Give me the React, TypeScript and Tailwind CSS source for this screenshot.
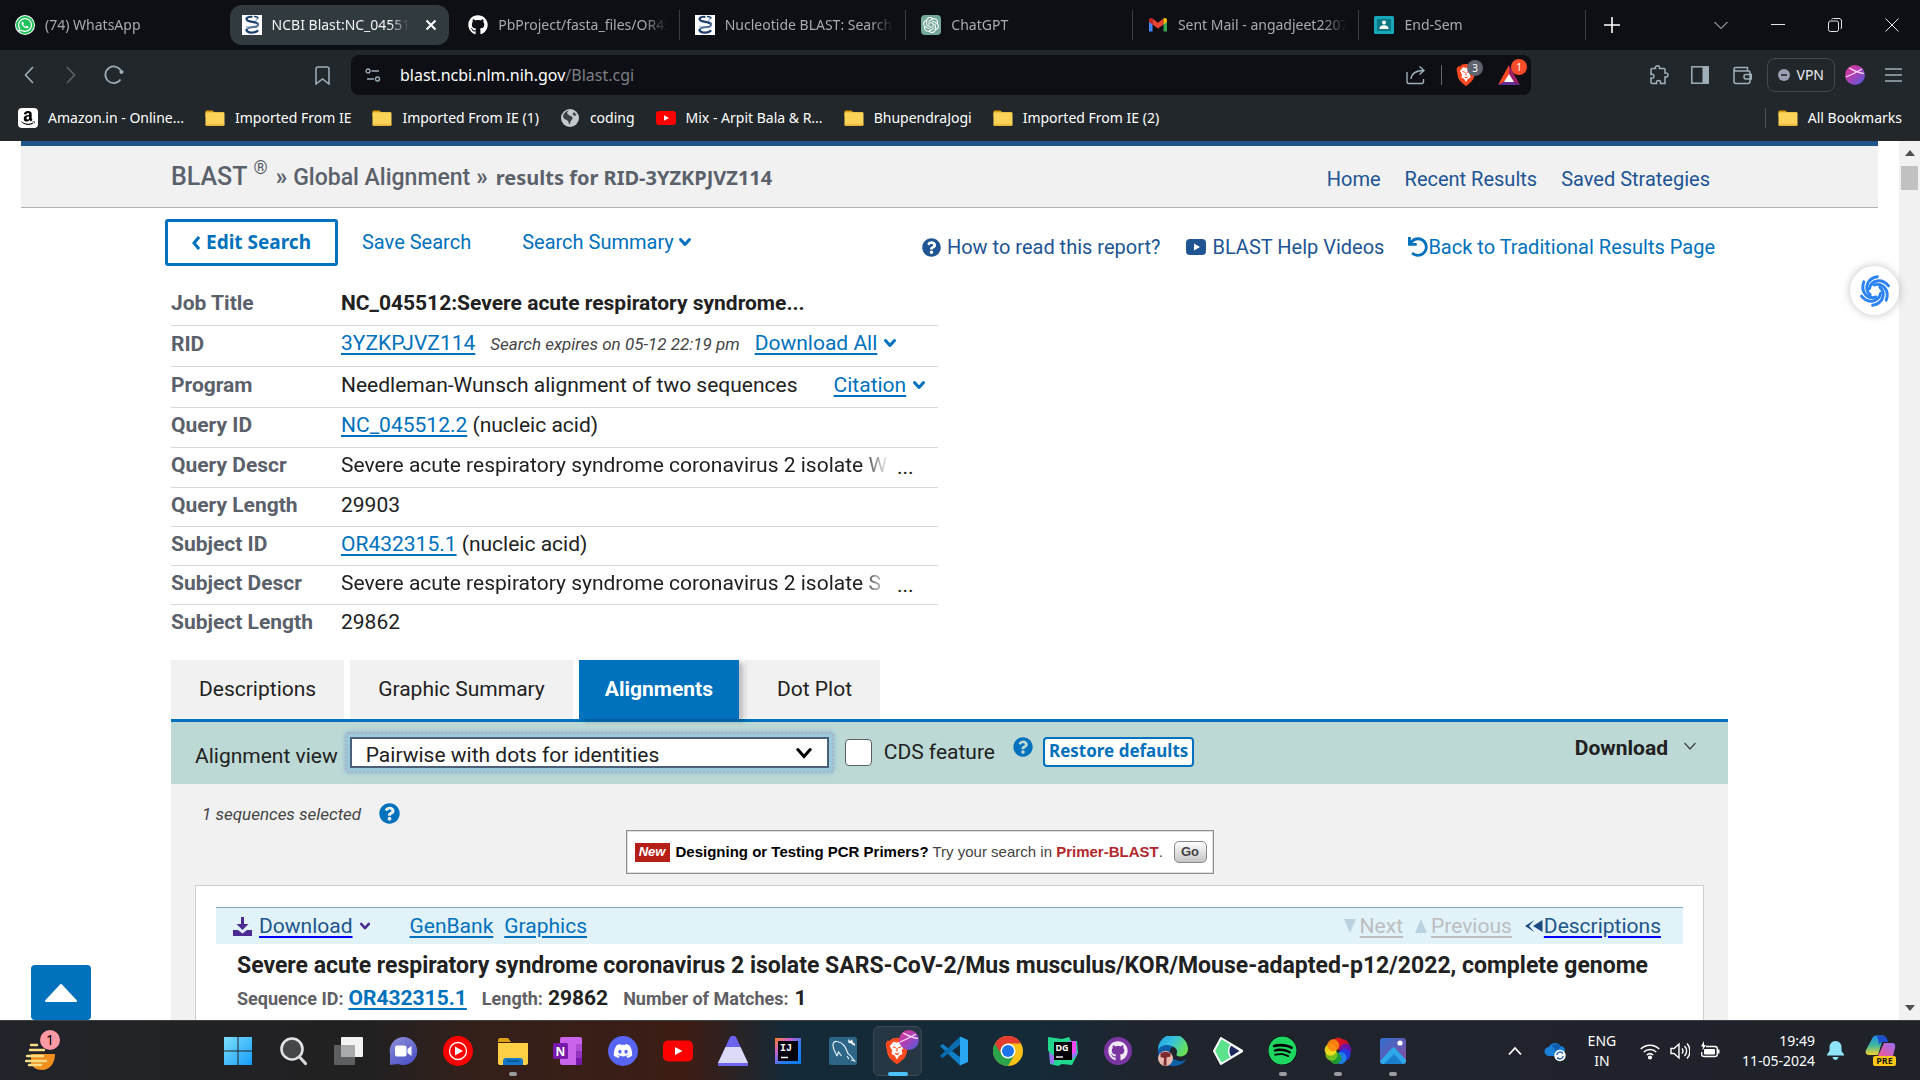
import React from "react";
import {
  FaAmazon,
  FaDiscord,
  FaGithub,
  FaQuestionCircle,
  FaSpotify,
  FaUndo,
  FaWhatsapp,
} from "react-icons/fa";
import { SiOpenai } from "react-icons/si";

const UI = "font-['Noto_Sans','Open_Sans',sans-serif]";
const BOLD_UI = "font-['Noto_Sans','Open_Sans',sans-serif] font-bold";

/* ---------- icons ---------- */

function BlastIcon() {
  return (
    <svg className="size-5" viewBox="0 0 20 20">
      <rect width="20" height="20" fill="#fff" />
      <path d="M16 3C13 4 15 7 12 7.500M4 11.500C6 13 12 11 15 12.500" fill="none" stroke="#9fb4cc" strokeWidth="1.500" />
      <path d="M9.500 1.800C5 1.500 3 4 6 5.800c3 1.500 8 .8 10 3.200" fill="none" stroke="#1f3f6b" strokeWidth="2.200" strokeLinecap="round" />
      <path d="M16 9c1 2.500-3 3-6 3.200-3 .3-5 1.200-5.500 2.800" fill="none" stroke="#55749c" strokeWidth="2" strokeLinecap="round" />
      <path d="M4.500 15c.5 2.500 6 4 11 1" fill="none" stroke="#1f3f6b" strokeWidth="2.200" strokeLinecap="round" />
      <path d="M12 1.500c2 0 4 .8 4 2" fill="none" stroke="#1f3f6b" strokeWidth="1.600" />
    </svg>
  );
}

function WhatsAppIcon() {
  return (
    <span className="flex size-5 items-center justify-center rounded-full bg-white">
      <span className="flex size-[18px] items-center justify-center rounded-full bg-[#1fc15b] text-white">
        <FaWhatsapp className="size-4" />
      </span>
    </span>
  );
}

function ChatGptIcon() {
  return (
    <span className="flex size-5 items-center justify-center rounded bg-[#74a89b] text-white">
      <SiOpenai className="size-4" />
    </span>
  );
}

function GmailIcon() {
  return (
    <svg className="size-5" viewBox="0 0 20 20">
      <path d="M1 5v11.500h3.500V8z" fill="#4285f4" />
      <path d="M15.500 8v8.500H19V5z" fill="#34a853" />
      <path d="M1 5.200C1 3 3.300 2.600 4.500 3.500V9.500L1 7z" fill="#c5221f" />
      <path d="M4.500 3.500L10 7.700l5.500-4.200v6L10 13.500 4.500 9.500z" fill="#ea4335" />
      <path d="M15.500 3.500C17 2.500 19 3.200 19 5.200V7l-3.500 2.500z" fill="#fbbc04" />
    </svg>
  );
}

function ClassroomIcon() {
  return (
    <svg className="size-5" viewBox="0 0 20 20">
      <rect y="1" width="20" height="18" rx="1.500" fill="#16a8b8" />
      <rect x="3" y="4" width="14" height="12" fill="#0c7885" />
      <circle cx="10" cy="7.500" r="2" fill="#fff" />
      <path d="M5.500 14c0-3 2-3.800 4.500-3.800s4.500.8 4.500 3.800z" fill="#fff" />
    </svg>
  );
}

function FolderIcon() {
  return (
    <svg className="size-5" viewBox="0 0 20 20">
      <path d="M.5 4c0-1 .5-1.500 1.500-1.500h5c1 0 1.500 1 2 1.800H19V9H.5z" fill="#dd9a0b" />
      <rect x=".5" y="4.200" width="19" height="13.500" rx="1.200" fill="#fbd358" />
      <path d="M.5 16v.6c0 .7.5 1.200 1.200 1.200h16.600c.7 0 1.200-.5 1.200-1.200V16z" fill="#f0bb3a" />
    </svg>
  );
}

function YouTubeIcon({ className }: { className: string }) {
  return (
    <svg className={className} viewBox="0 0 30 30">
      <rect y="4.500" width="30" height="21" rx="5" fill="#f00" />
      <path d="M12 11l7.500 4-7.500 4z" fill="#fff" />
    </svg>
  );
}

function GlobeIcon() {
  return (
    <svg className="size-5" viewBox="0 0 20 20">
      <circle cx="10" cy="10" r="9" fill="#c5c8cc" />
      <path d="M9 2.500c-2 1-2.500 3-1 3.800s1 1.700 2.500 1.700 2.500 1 1.800 3-2 1.500-2 3.500-.8 2.500-1.300 1-1-3-2.500-3.500S4 10.500 3 9C3 5.500 6 3 9 2.500zM14 4l2.500 3-2 1-2-2z" fill="#3c4146" />
    </svg>
  );
}

function AvatarIcon({ className }: { className: string }) {
  return (
    <svg className={className} viewBox="0 0 20 20">
      <defs>
        <linearGradient id="avatar" x1="0" y1="0" x2="1" y2="1">
          <stop offset="0" stopColor="#e0368c" />
          <stop offset=".45" stopColor="#b03fb4" />
          <stop offset="1" stopColor="#4a5be0" />
        </linearGradient>
      </defs>
      <circle cx="10" cy="10" r="10" fill="url(#avatar)" />
      <path d="M1 12C6 10 12 7 17 4M4 3c4 2 9 5 15 5.500" fill="none" stroke="#f7d9f1" strokeWidth="1.200" />
    </svg>
  );
}

function BraveIcon({ className }: { className: string }) {
  return (
    <svg className={className} viewBox="1 0 20 22">
      <path d="M11 0l4 .5 2 2 2-.3 1.500 3L19 13c-1 4-5 7-8 9-3-2-7-5-8-9L1.500 5.200 3 2.200l2 .3 2-2z" fill="#fb4a1f" />
      <path d="M11 4l3-.8L17 7l-2 3.500.5 3-2.500 1.200L11 18l-2-3.300L6.500 13.500l.5-3L5 7l3-3.800z" fill="#fff" />
      <path d="M7.500 7.500l2.500.8M14.500 7.500l-2.500.8M9.500 13l1.500.8 1.500-.8M11 8.500v3" stroke="#fb4a1f" strokeWidth="1" fill="none" />
    </svg>
  );
}

function ChevronBold({ className }: { className: string }) {
  return (
    <svg className={className} viewBox="0 0 14 14" fill="none" stroke="currentColor" strokeWidth="3" strokeLinecap="round" strokeLinejoin="round">
      <path d="M2.500 4.500L7 9.500l4.500-5" />
    </svg>
  );
}

/* ---------- browser frame ---------- */

const TABS = [
  { title: "(74) WhatsApp", icon: <WhatsAppIcon /> },
  { title: "NCBI Blast:NC_04551", icon: <BlastIcon />, active: true },
  { title: "PbProject/fasta_files/OR43", icon: <FaGithub className="size-5 text-white" />, line: true },
  { title: "Nucleotide BLAST: Search", icon: <BlastIcon />, line: true },
  { title: "ChatGPT", icon: <ChatGptIcon />, line: true },
  { title: "Sent Mail - angadjeet2207", icon: <GmailIcon />, line: true },
  { title: "End-Sem", icon: <ClassroomIcon />, line: true },
];

function TabStrip() {
  return (
    <div className="flex h-[50px] shrink-0 items-center bg-[#0e0f14]">
      <div className="flex max-w-[1586px] flex-1 items-center" role="tablist">
        {TABS.map((t) => (
          <div key={t.title} className={`flex h-[30px] min-w-0 flex-1 items-center border-r ${t.line ? "border-[#3b3d42]" : "border-transparent"}`}>
            <div className={`mx-[3px] flex h-10 min-w-0 flex-1 items-center rounded-xl pr-2 pl-3 ${t.active ? "bg-[#313a3f]" : ""}`}>
              <button role="tab" className="flex min-w-0 flex-1 items-center gap-[10px]">
                <span className="shrink-0">{t.icon}</span>
                <span className={`min-w-0 flex-1 overflow-hidden text-left text-sm whitespace-nowrap [mask-image:linear-gradient(to_right,black_86%,transparent)] ${t.active ? "text-[#f2f3f4]" : "text-[#a9abae]"}`}>
                  {t.title}
                </span>
              </button>
              {t.active && (
                <button aria-label="Close tab" className="ml-3 flex size-5 items-center justify-center text-white">
                  <svg className="size-3" viewBox="0 0 12 12" stroke="currentColor" strokeWidth="2"><path d="M1.500 1.500l9 9M10.500 1.500l-9 9" /></svg>
                </button>
              )}
            </div>
          </div>
        ))}
      </div>
      <button aria-label="New tab" className="ml-4 flex size-5 items-center justify-center text-white">
        <svg className="size-4" viewBox="0 0 16 16" stroke="currentColor" strokeWidth="1.600"><path d="M8 0v16M0 8h16" /></svg>
      </button>
      <div className="ml-auto flex items-center text-[#e4e5e7]">
        <button aria-label="Search tabs" className="flex w-[57px] justify-center">
          <svg className="size-[14px]" viewBox="0 0 14 14" fill="none" stroke="currentColor"><path d="M.5 4L7 10.500 13.500 4" /></svg>
        </button>
        <button aria-label="Minimize" className="flex w-[57px] justify-center">
          <svg className="size-[14px]" viewBox="0 0 14 14" stroke="currentColor"><path d="M0 6.500h14" /></svg>
        </button>
        <button aria-label="Restore" className="flex w-[57px] justify-center">
          <svg className="size-[14px]" viewBox="0 0 14 14" fill="none" stroke="currentColor"><rect x=".5" y="3" width="10" height="10.500" rx="2" /><path d="M3.500 1.200C4 .7 4.500.5 5.500.5H11c1.500 0 2.500 1 2.500 2.500v6c0 1-.3 1.500-1 2" /></svg>
        </button>
        <button aria-label="Close" className="flex w-[57px] justify-center">
          <svg className="size-[14px]" viewBox="0 0 14 14" stroke="currentColor"><path d="M.5.5l13 13M13.500.5l-13 13" /></svg>
        </button>
      </div>
    </div>
  );
}

function Toolbar() {
  return (
    <div className="flex h-[50px] shrink-0 items-center bg-[#22272b] text-[#9fb0ba]">
      <button aria-label="Back" className="ml-[19px] flex w-5 justify-center">
        <svg className="h-[18px] w-[10px]" viewBox="0 0 10 18" fill="none" stroke="currentColor" strokeWidth="1.600"><path d="M9 1L1.500 9 9 17" /></svg>
      </button>
      <button aria-label="Forward" className="ml-[22px] flex w-5 justify-center text-[#59636a]">
        <svg className="h-[18px] w-[10px]" viewBox="0 0 10 18" fill="none" stroke="currentColor" strokeWidth="1.600"><path d="M1 1l7.500 8L1 17" /></svg>
      </button>
      <button aria-label="Reload" className="ml-[22px]">
        <svg className="size-[22px]" viewBox="0 0 22 22" fill="none" stroke="currentColor" strokeWidth="1.700"><path d="M17.500 15.500A8.300 8.300 0 1 1 18.500 8" /><circle cx="18.500" cy="8" r="2" fill="currentColor" stroke="none" /></svg>
      </button>
      <button aria-label="Bookmark this page" className="ml-[187px] flex w-5 justify-center">
        <svg className="h-[19px] w-[15px]" viewBox="0 0 15 19" fill="none" stroke="currentColor" strokeWidth="1.500"><path d="M1 3c0-1.300.7-2 2-2h9c1.300 0 2 .7 2 2v15l-6.500-5L1 18z" /></svg>
      </button>
      <div className="ml-[19px] flex h-10 max-w-[1180px] flex-1 items-center rounded-lg bg-[#0e0f14] pr-[10px]">
        <button aria-label="Site information" className="ml-[14px] shrink-0">
          <svg className="size-4" viewBox="0 0 16 16" fill="none" stroke="currentColor" strokeWidth="1.300"><circle cx="3" cy="4" r="2" /><path d="M6.500 4H14M2 12h7" /><circle cx="12.500" cy="12" r="2" /></svg>
        </button>
        <div className="relative ml-[19px] h-6 flex-1">
          <input aria-label="Address" className="absolute inset-0 w-full bg-transparent outline-none" />
          <span className="pointer-events-none text-base whitespace-nowrap text-white">
            blast.ncbi.nlm.nih.gov<span className="text-[#7c7f84]">/Blast.cgi</span>
          </span>
        </div>
        <button aria-label="Share">
          <svg className="size-5" viewBox="0 0 20 20" fill="none" stroke="currentColor" strokeWidth="1.400"><path d="M1 7v9.500c0 1.500.8 2 2 2h12.500c1.200 0 2-.6 2-2V14M5 14c.5-5 4-8.500 13-8.500M13.500 1.500l4.500 4-4.500 4" /></svg>
        </button>
        <span className="mr-[13px] ml-[15px] h-5 w-px bg-[#64666b]" />
        <button aria-label="Brave Shields" className="relative">
          <BraveIcon className="h-[22px] w-[22px]" />
          <span className="absolute -top-1 left-3 flex size-4 items-center justify-center rounded-full bg-[#5e6370] text-[10px] text-white">3</span>
        </button>
        <button aria-label="Rewards" className="relative ml-5">
          <svg className="size-6" viewBox="0 0 24 24"><path d="M12 2L1 22l11-6z" fill="#ff4724" /><path d="M12 2l11 20-11-6z" fill="#9e1f63" /><path d="M1 22h22l-11-6z" fill="#662d91" /><path d="M12 11l-5 8h10z" fill="#fff" /></svg>
          <span className="absolute -top-1 left-[14px] flex size-4 items-center justify-center rounded-full bg-[#fb4d2b] text-[10px] text-white">1</span>
        </button>
      </div>
      <div className="ml-auto flex items-center pr-[18px]">
        <button aria-label="Extensions">
          <svg className="size-5" viewBox="0 0 20 20" fill="none" stroke="currentColor" strokeWidth="1.500"><path d="M3 3.500h3.500C6 1.500 7 .8 8.500.8s2.500.9 2 2.700H15c.6 0 1 .4 1 1V8c2-.4 3 .6 3 2s-1 2.400-3 2v6.500h-4.500c.6-2-.4-3-2-3s-2.500 1-2 3H3c-.6 0-1-.4-1-1V13c2 .5 3-.5 3-1.800S4 9 2 9.500v-5c0-.6.4-1 1-1z" /></svg>
        </button>
        <button aria-label="Sidebar" className="ml-[22px]">
          <svg className="size-[18px]" viewBox="0 0 18 18"><rect x=".8" y=".8" width="16.400" height="16.400" fill="none" stroke="currentColor" strokeWidth="1.500" /><rect x="11.500" y="1" width="6" height="16" fill="currentColor" /></svg>
        </button>
        <button aria-label="Wallet" className="ml-6">
          <svg className="size-[19px]" viewBox="0 0 19 19" fill="none" stroke="currentColor" strokeWidth="1.500"><path d="M1 3.500C1 2.500 1.800 1.500 3 1.500h11.500V5M1 3.500C1 4.500 2 5 3 5h12.500c1 0 1.500.6 1.500 1.500v9c0 1.200-.8 2-2 2H3c-1.200 0-2-.8-2-2zM18.500 8.500h-5.500c-1.300 0-2 .8-2 2s.7 2.500 2 2.500h5.500z" /></svg>
        </button>
        <button className="ml-[15px] flex h-[34px] items-center gap-[6px] rounded-lg border border-[#424b51] px-[10px] text-sm text-[#eceef0]">
          <svg className="size-3" viewBox="0 0 12 12"><circle cx="6" cy="6" r="6" fill="#9d9fb6" /><path d="M3 6h6" stroke="#22272b" strokeWidth="1.600" /></svg>
          VPN
        </button>
        <button aria-label="Profile" className="ml-[10px]"><AvatarIcon className="size-5" /></button>
        <button aria-label="Menu" className="ml-5">
          <svg className="h-[14px] w-[17px]" viewBox="0 0 17 14" stroke="currentColor" strokeWidth="1.300"><path d="M0 1h17M0 7h17M0 13h17" /></svg>
        </button>
      </div>
    </div>
  );
}

function BookmarkBar() {
  const item = "flex items-center gap-[10px] whitespace-nowrap";
  return (
    <nav aria-label="Bookmarks" className="flex h-[41px] shrink-0 items-center bg-[#22272b] px-[18px] pb-[6px] text-sm text-white">
      <div className="flex flex-1 items-center gap-[21px]">
        <a href="#amazon" className={item}>
          <span className="flex size-5 items-center justify-center rounded bg-white text-black"><FaAmazon className="size-4" /></span>
          Amazon.in - Online...
        </a>
        <a href="#ie" className={item}><FolderIcon />Imported From IE</a>
        <a href="#ie1" className={item}><FolderIcon />Imported From IE (1)</a>
        <a href="#coding" className={item}><GlobeIcon />coding</a>
        <a href="#mix" className={item}><YouTubeIcon className="size-5" />Mix - Arpit Bala &amp; R...</a>
        <a href="#bj" className={item}><FolderIcon />BhupendraJogi</a>
        <a href="#ie2" className={item}><FolderIcon />Imported From IE (2)</a>
      </div>
      <span className="mr-3 h-5 w-px bg-[#4b5257]" />
      <a href="#all" className={item}><FolderIcon />All Bookmarks</a>
    </nav>
  );
}

/* ---------- page ---------- */

const LINK = "text-[#0071bc] underline decoration-2 underline-offset-[3px]";

function PageHeader() {
  return (
    <header className="mx-[21px] flex h-[67px] items-center border-t-[5px] border-b border-t-[#20558a] border-b-[#aeb0b5] bg-[#f1f1f1] pr-[168px] pl-[150px]">
      <h1 className="flex flex-1 items-baseline text-[23px] font-bold whitespace-nowrap text-[#5b616b]">
        <span className="text-[25px] font-medium">BLAST</span>
        <sup className="top-0 ml-[6px] self-start text-lg leading-5 font-normal">®</sup>
        <span className="ml-2">»</span>
        <span className="ml-[6px] font-medium">Global Alignment</span>
        <span className="ml-[6px]">»</span>
        <span className={`ml-2 text-xl ${BOLD_UI}`}>results for RID-3YZKPJVZ114</span>
      </h1>
      <nav className="flex gap-6 pt-1 text-xl text-[#205493]">
        <a href="#home">Home</a>
        <a href="#recent">Recent Results</a>
        <a href="#saved">Saved Strategies</a>
      </nav>
    </header>
  );
}

function Actions() {
  return (
    <div className="-ml-[6px] flex items-start pt-[11px] pr-[13px] text-xl text-[#0071bc]">
      <button className={`flex h-[47px] items-center gap-[6px] rounded-[3px] border-[3px] border-[#0071bc] px-6 text-[19px] ${BOLD_UI}`}>
        <svg className="h-[14px] w-2" viewBox="0 0 8 14" fill="none" stroke="currentColor" strokeWidth="3"><path d="M7 1L2 7l5 6" /></svg>
        Edit Search
      </button>
      <a href="#save" className="mt-[9px] ml-6">Save Search</a>
      <button className="mt-[9px] ml-[51px] flex items-center gap-1">Search Summary <ChevronBold className="size-[14px]" /></button>
      <div className="mt-[14px] ml-auto flex items-center text-[#205493]">
        <a href="#how" className="flex items-center gap-[6px]"><FaQuestionCircle className="size-[19px]" />How to read this report?</a>
        <a href="#videos" className="ml-[26px] flex items-center gap-[6px]">
          <svg className="h-4 w-5" viewBox="0 0 20 16"><rect width="20" height="16" rx="4" fill="currentColor" /><path d="M8 4.500l6 3.500-6 3.500z" fill="#fff" /></svg>
          BLAST Help Videos
        </a>
        <a href="#back" className="ml-6 flex items-center text-[#0071bc]"><FaUndo className="size-5" />Back to Traditional Results Page</a>
      </div>
    </div>
  );
}

function Clipped({ text }: { text: string }) {
  return (
    <span className="flex items-start">
      <span className="w-[548px] overflow-hidden whitespace-nowrap [mask-image:linear-gradient(to_right,black_95%,transparent)]">{text}</span>
      <button aria-label="Show full description" className="ml-2 h-7 leading-8">...</button>
    </span>
  );
}

const ROWS: { label: string; height: string; value: React.ReactNode }[] = [
  { label: "Job Title", height: "h-10", value: <b>NC_045512:Severe acute respiratory syndrome...</b> },
  {
    label: "RID",
    height: "h-[41px]",
    value: (
      <span className="flex items-baseline whitespace-nowrap">
        <a href="#rid" className={LINK}>3YZKPJVZ114</a>
        <em className="ml-[15px] text-[17px] text-[#444]">Search expires on 05-12 22:19 pm</em>
        <button className="ml-[15px] flex items-baseline gap-[6px] text-[#0071bc]"><span className={LINK}>Download All</span> <ChevronBold className="size-[14px]" /></button>
      </span>
    ),
  },
  {
    label: "Program",
    height: "h-[41px]",
    value: (
      <span className="flex items-baseline whitespace-nowrap">
        Needleman-Wunsch alignment of two sequences
        <button className="ml-9 flex items-baseline gap-[6px] text-[#0071bc]"><span className={LINK}>Citation</span> <ChevronBold className="size-[14px]" /></button>
      </span>
    ),
  },
  { label: "Query ID", height: "h-10", value: <><a href="#query" className={LINK}>NC_045512.2</a> (nucleic acid)</> },
  { label: "Query Descr", height: "h-10", value: <Clipped text="Severe acute respiratory syndrome coronavirus 2 isolate W" /> },
  { label: "Query Length", height: "h-[39px]", value: "29903" },
  { label: "Subject ID", height: "h-[39px]", value: <><a href="#subject" className={LINK}>OR432315.1</a> (nucleic acid)</> },
  { label: "Subject Descr", height: "h-[39px]", value: <Clipped text="Severe acute respiratory syndrome coronavirus 2 isolate S" /> },
  { label: "Subject Length", height: "h-[39px]", value: "29862" },
];

function JobDetails() {
  return (
    <table className="mt-[19px] w-[767px] border-collapse text-[21px] leading-7 text-[#212121]">
      <tbody>
        {ROWS.map((r) => (
          <tr key={r.label} className={`${r.height} border-b border-[#d6d7d9] last:border-b-0`}>
            <th scope="row" className="w-[170px] p-0 pb-1 text-left font-bold whitespace-nowrap text-[#5b616b]">{r.label}</th>
            <td className="p-0 pb-1">{r.value}</td>
          </tr>
        ))}
      </tbody>
    </table>
  );
}

function ResultTabs() {
  const tab = "h-[59px] bg-[#f1f1f1]";
  return (
    <div role="tablist" className="mt-[17px] flex border-b-[3px] border-[#0071bc] text-[21px] text-[#212121]">
      <button role="tab" className={`${tab} mr-[6px] px-7`}>Descriptions</button>
      <button role="tab" className={`${tab} mr-[6px] px-7`}>Graphic Summary</button>
      <button role="tab" aria-selected="true" className="z-10 mr-[6px] h-[59px] bg-[#0071bc] px-[26px] font-bold text-white shadow-[5px_2px_5px_rgba(0,0,0,0.25)]">Alignments</button>
      <button role="tab" className={`${tab} px-8 pr-7`}>Dot Plot</button>
    </div>
  );
}

function AlignmentControls() {
  return (
    <div className="flex h-[62px] items-start bg-[#bdd9d5] pl-6 text-[21px] leading-7 text-[#212121]">
      <label htmlFor="view" className="mt-5">Alignment view</label>
      <div className="relative mt-[10px] ml-[7px] rounded-sm border-2 border-dotted border-[#a8b2c4] bg-[#9cc9dc] p-[3px] shadow-[0_0_5px_rgba(80,160,220,0.5)]">
        <select id="view" className="block h-[31px] w-[479px] appearance-none rounded-none border-2 border-[#4c5f78] bg-white pt-1 pl-[14px] leading-6 outline-none">
          <option>Pairwise with dots for identities</option>
        </select>
        <svg className="pointer-events-none absolute top-[11px] right-5 size-4" viewBox="0 0 16 16" fill="none" stroke="#000" strokeWidth="3" strokeLinecap="round"><path d="M1.800 4.500L8 11.500l6.200-7" /></svg>
      </div>
      <input id="cds" type="checkbox" className="mt-[17px] ml-[11px] size-[27px] appearance-none rounded border border-[#5b616b] bg-white" />
      <label htmlFor="cds" className="mt-4 ml-3">CDS feature</label>
      <button aria-label="Help" className="mt-[15px] ml-[18px] text-[#0071bc]"><FaQuestionCircle className="size-5" /></button>
      <button className={`mt-[15px] ml-[10px] h-[30px] rounded-sm border-2 border-[#0071bc] bg-white px-1 pb-1 text-[17px] leading-6 text-[#0071bc] ${BOLD_UI}`}>Restore defaults</button>
      <button className="mt-3 mr-[32px] ml-auto flex items-center gap-4 font-bold">
        Download
        <svg className="mb-1 h-2 w-3" viewBox="0 0 12 8" fill="none" stroke="#444" strokeWidth="1.300"><path d="M.5 1L6 7l5.500-6" /></svg>
      </button>
    </div>
  );
}

function PrimerBanner() {
  return (
    <div className="mx-auto flex h-11 w-[588px] items-center border border-[#8e8e8e] bg-white pl-2 font-['Liberation_Sans',Arial,sans-serif] text-[15px] whitespace-nowrap text-[#444] shadow-[inset_0_0_0_1px_#ddd]">
      <span className="flex h-[19px] w-[35px] items-center justify-center bg-[#b51f17] text-[13px] font-bold text-white italic">New</span>
      <span className="ml-[6px]">
        <b className="text-black">Designing or Testing PCR Primers?</b> Try your search in <a href="#primer" className="font-bold text-[#b3282d]">Primer-BLAST</a>.
      </span>
      <button className="mr-[6px] ml-auto h-[22px] w-[33px] rounded-[5px] border border-[#888] bg-gradient-to-b from-white to-[#c4c4c4] text-[13px] leading-5 font-bold text-[#444]">Go</button>
    </div>
  );
}

function AlignmentCard() {
  const dark = "underline decoration-[#0000ff] decoration-2 underline-offset-[3px] text-[#20558a]";
  const off = "text-[#bcbec0] underline decoration-2 underline-offset-[3px]";
  return (
    <section className="mx-6 mt-[11px] border border-[#cfcfcf] bg-white px-5 pt-[21px] pb-10 text-[21px] leading-7 text-[#212121]">
      <div className="flex h-[37px] items-center border-t border-[#85a9c4] bg-[#e1f2f9] pr-[22px] pl-[17px]">
        <button className="flex items-center text-[#4c2c92]">
          <svg className="size-[19px]" viewBox="0 0 19 19" fill="currentColor"><path d="M8 0h3v7h4.500L9.500 13 3.500 7H8zM0 13h5l4.500 3.500L14 13h5v6H0z" /></svg>
          <span className={`ml-[7px] ${dark}`}>Download</span>
          <ChevronBold className="ml-[6px] size-3" />
        </button>
        <a href="#genbank" className={`ml-[39px] ${LINK}`}>GenBank</a>
        <a href="#graphics" className={`ml-[11px] ${LINK}`}>Graphics</a>
        <div className="ml-auto flex items-center">
          <svg className="mr-1 h-[14px] w-3" viewBox="0 0 12 14"><path d="M0 0h12L6 14z" fill="#b9d2df" /></svg>
          <a href="#next" className={off}>Next</a>
          <svg className="mr-1 ml-3 h-[14px] w-3" viewBox="0 0 12 14"><path d="M0 14h12L6 0z" fill="#b9d2df" /></svg>
          <a href="#previous" className={off}>Previous</a>
          <svg className="ml-3 h-3 w-[19px]" viewBox="0 0 19 12" fill="#1a4c82"><path d="M18.500 0v12L9 6zM10.500 0L1 6l9.500 6-5.500-6z" /></svg>
          <a href="#descriptions" className={`ml-px ${dark}`}>Descriptions</a>
        </div>
      </div>
      <h2 className="mt-[6px] pl-[21px] text-[23px] leading-8 font-bold whitespace-nowrap">
        Severe acute respiratory syndrome coronavirus 2 isolate SARS-CoV-2/Mus musculus/KOR/Mouse-adapted-p12/2022, complete genome
      </h2>
      <div className="mt-[2px] flex items-baseline pl-[21px] text-lg leading-7 font-bold text-[#5f6063]">
        <span>Sequence ID:</span>
        <a href="#seq" className={`ml-[5px] text-[21px] ${LINK}`}>OR432315.1</a>
        <span className="ml-[15px]">Length:</span>
        <span className="ml-[5px] text-[21px] text-[#212121]">29862</span>
        <span className="ml-[15px]">Number of Matches:</span>
        <span className="ml-[6px] text-[21px] text-[#212121]">1</span>
      </div>
    </section>
  );
}

function SwirlButton() {
  return (
    <button aria-label="Assistant" className="absolute top-[125px] right-[21px] flex size-[49px] items-center justify-center rounded-full bg-white shadow-[0_0_8px_rgba(0,0,0,0.25)]">
      <svg className="size-9" viewBox="0 0 32 32" fill="none" stroke="#2b83f6" strokeLinecap="round" strokeWidth="2.600">
        {[0, 60, 120, 180, 240, 300].map((a) => (
          <path key={a} d="M11 14C12.500 6.500 22 4 28 11.500" transform={`rotate(${a} 16 16)`} />
        ))}
      </svg>
    </button>
  );
}

function Page() {
  return (
    <div className="relative flex min-h-0 flex-1 overflow-hidden bg-white font-['Roboto',sans-serif]">
      <main className="min-w-0 flex-1">
        <PageHeader />
        <div className="mx-[171px]">
          <Actions />
          <JobDetails />
          <ResultTabs />
          <AlignmentControls />
          <div className="bg-[#f1f1f1] pb-10">
            <div className="flex h-[46px] items-center pt-3 pl-[31px]">
              <em className="mt-1 text-[17px] text-[#444]">1 sequences selected</em>
              <button aria-label="Selection help" className="ml-[18px] text-[#0071bc]"><FaQuestionCircle className="size-[21px]" /></button>
            </div>
            <div className="pr-[60px]"><PrimerBanner /></div>
            <AlignmentCard />
          </div>
        </div>
      </main>
      <div aria-hidden="true" className="flex w-[21px] shrink-0 flex-col items-center bg-[#f1f1f1]">
        <svg className="mt-[9px] h-[6px] w-[10px]" viewBox="0 0 10 6"><path d="M0 6h10L5 0z" fill="#505050" /></svg>
        <div className="mt-[10px] h-6 w-[17px] bg-[#c1c1c1]" />
        <svg className="mt-auto mb-[9px] h-[6px] w-[10px]" viewBox="0 0 10 6"><path d="M0 0h10L5 6z" fill="#505050" /></svg>
      </div>
      <SwirlButton />
      <button aria-label="Back to top" className="absolute bottom-0 left-[31px] flex h-[55px] w-[60px] items-center justify-center rounded bg-[#0071bc]">
        <svg className="h-5 w-[34px]" viewBox="0 0 34 20"><path d="M17 2L32 18H2z" fill="#fff" stroke="#fff" strokeWidth="2" strokeLinejoin="round" /></svg>
      </button>
    </div>
  );
}

/* ---------- taskbar ---------- */

const S = "size-[30px]";

const APPS: { name: string; icon: React.ReactNode; running?: boolean; active?: boolean }[] = [
  {
    name: "Start",
    icon: (
      <svg className={S} viewBox="0 0 30 30">
        <defs><linearGradient id="win" x1="0" y1="0" x2="1" y2="1"><stop offset="0" stopColor="#7fe0fd" /><stop offset="1" stopColor="#149cfb" /></linearGradient></defs>
        <path d="M1 1h13.500v13.500H1zM15.500 1H29v13.500H15.500zM1 15.500h13.500V29H1zM15.500 15.500H29V29H15.500z" fill="url(#win)" />
      </svg>
    ),
  },
  {
    name: "Search",
    icon: (
      <svg className={S} viewBox="0 0 30 30"><circle cx="14" cy="13" r="10.500" fill="#444649" stroke="#e0e2e4" strokeWidth="2.600" /><path d="M21.500 21l6 6.500" stroke="#d6d8da" strokeWidth="3.200" strokeLinecap="round" /></svg>
    ),
  },
  {
    name: "Task view",
    icon: (
      <svg className={S} viewBox="0 0 30 30"><rect x="8" y="1" width="22" height="20" rx="1" fill="#f3f3f3" /><rect x="1" y="9" width="21" height="20" rx="1" fill="#5d5f61" /><rect x="8" y="9" width="14" height="12" fill="#a9aaab" /></svg>
    ),
  },
  {
    name: "Chat",
    icon: (
      <svg className={S} viewBox="0 0 30 30">
        <defs><linearGradient id="chat" x1="0" y1="0" x2=".6" y2="1"><stop offset="0" stopColor="#8d8fd6" /><stop offset="1" stopColor="#5156c9" /></linearGradient></defs>
        <path d="M15 1a14 14 0 1 1-5 27L2 29V18A14 14 0 0 1 15 1z" fill="url(#chat)" />
        <rect x="7" y="9.500" width="11.500" height="11" rx="2" fill="#fff" /><path d="M19.500 13l4-3v10l-4-3z" fill="#fff" />
      </svg>
    ),
  },
  {
    name: "YouTube Music",
    icon: (
      <svg className={S} viewBox="0 0 30 30"><circle cx="15" cy="15" r="15" fill="#f00" /><circle cx="15" cy="15" r="8.500" fill="none" stroke="#fff" strokeWidth="1.300" /><path d="M12 10.500l8 4.500-8 4.500z" fill="#fff" /></svg>
    ),
  },
  {
    name: "File Explorer",
    running: true,
    icon: (
      <svg className={S} viewBox="0 0 30 30"><path d="M0 4c0-1 1-2 2-2h8l3 4H0z" fill="#e0a014" /><path d="M0 7h30v20c0 1-.8 2-2 2H2c-1.200 0-2-1-2-2z" fill="#fdcf45" /><path d="M5 29v-4c0-2 1-3 3-3h14c2 0 3 1 3 3v4z" fill="#1177c8" /><path d="M9 25h12" stroke="#0a4f8c" strokeWidth="1.500" /></svg>
    ),
  },
  {
    name: "OneNote",
    icon: (
      <svg className={S} viewBox="0 0 30 30"><rect x="7" y="1" width="22" height="28" rx="2" fill="#ca64ea" /><path d="M23 8h6v7h-6z" fill="#ae4bd5" /><path d="M23 15h6v7h-6z" fill="#9332bf" /><path d="M23 22h6v5c0 1-1 2-2 2h-4z" fill="#7719aa" /><rect y="7" width="15" height="16" rx="1.500" fill="#7719aa" /><text x="7.500" y="19.500" textAnchor="middle" fontSize="12" fontWeight="700" fill="#fff">N</text></svg>
    ),
  },
  { name: "Discord", icon: <span className="flex size-[30px] items-center justify-center rounded-full bg-[#5865f2] text-white"><FaDiscord className="size-5" /></span> },
  { name: "YouTube", icon: <YouTubeIcon className={S} /> },
  {
    name: "Prism",
    icon: (
      <svg className={S} viewBox="0 0 30 30"><path d="M12 1c1-1.300 5-1.300 6 0L30 27v3H0v-3z" fill="#6c63ee" /><path d="M7.500 11h15L30 27H0z" fill="#dcdaf9" /></svg>
    ),
  },
  {
    name: "IntelliJ IDEA",
    icon: (
      <svg className={S} viewBox="0 0 30 30">
        <defs><linearGradient id="ij" x1="0" y1="0" x2="1" y2="1"><stop offset="0" stopColor="#fc801d" /><stop offset=".3" stopColor="#c95fd0" /><stop offset=".6" stopColor="#2a7cf0" /><stop offset="1" stopColor="#087cfa" /></linearGradient></defs>
        <rect x="2" y="2" width="26" height="26" fill="url(#ij)" /><rect x="5" y="5" width="20" height="20" fill="#05020c" />
        <text x="7" y="15" fontSize="10" fontWeight="700" fill="#fff" className="font-['Liberation_Mono',monospace]">IJ</text><path d="M8 21.500h7" stroke="#fff" strokeWidth="1.500" />
      </svg>
    ),
  },
  {
    name: "MySQL Workbench",
    icon: (
      <svg className={S} viewBox="0 0 30 30"><rect x="1" y="1" width="28" height="28" rx="2.500" fill="#2d6587" /><path d="M9 20c-1-3-4-6-4-11 0-3 2-4 4-3.500 6 1 9 6 10.500 11 .5 2 3 2.500 4 4.500l3 4-3.500-1M9 20l1.500-4 3 4M19 20l2 3" fill="none" stroke="#e3eef4" strokeWidth="1.200" /><path d="M20 3l2 2 2-1.500 1 3 2 1.500 0 2-5-3-1.500 0z" fill="#f2f7fa" /></svg>
    ),
  },
  {
    name: "Brave",
    active: true,
    icon: (
      <span className="relative block size-[30px]">
        <BraveIcon className="ml-[2px] h-[30px] w-6" />
        <AvatarIcon className="absolute -top-[6px] left-[16px] size-5" />
      </span>
    ),
  },
  { name: "VS Code", icon: <svg className={S} viewBox="0 0 30 30"><path d="M2 10l2.500-2L22 21v8.500z" fill="#1180c8" /><path d="M2 20l2.500 2L22 9V.5z" fill="#0a6bb0" /><path d="M22 .5l8 3.500v22l-8 3.500z" fill="#2aa7f2" /></svg> },
  {
    name: "Chrome",
    icon: (
      <svg className={S} viewBox="0 0 30 30">
        <circle cx="15" cy="15" r="15" fill="#fbc116" />
        <path d="M2 7.500A15 15 0 0 0 15 30l6.500-11.200L15 15V7.500z" fill="#2ba24c" />
        <path d="M2 7.500A15 15 0 0 1 28 7.500H15a7.500 7.500 0 0 0-6.500 11.300z" fill="#e33b2e" />
        <circle cx="15" cy="15" r="7.500" fill="#fff" /><circle cx="15" cy="15" r="6" fill="#1a73e8" />
      </svg>
    ),
  },
  {
    name: "DataGrip",
    icon: (
      <svg className={S} viewBox="0 0 30 30"><path d="M0 1l14 2 7-2 2 4 6 0 1 12-6 12-10-1-4 2-8-2 1-8-3-6z" fill="#22d88f" /><path d="M1 16l5 4v8l-4-1z" fill="#9775f8" /><path d="M20 5l8 0 1 14-5 4z" fill="#9775f8" /><path d="M24 5l4 1v10l-4 2z" fill="#ff45ed" /><rect x="6" y="6" width="18" height="18" fill="#000" /><text x="7.500" y="14.500" fontSize="9" fontWeight="700" fill="#fff">DG</text><path d="M8 21h7" stroke="#fff" strokeWidth="1.400" /></svg>
    ),
  },
  { name: "GitHub Desktop", icon: <span className="flex size-7 items-center justify-center rounded-full bg-[#7a35a0] text-[#f0e8f5]"><FaGithub className="size-5" /></span> },
  {
    name: "Edge",
    icon: (
      <svg className={S} viewBox="0 0 30 30">
        <defs><linearGradient id="edge" x1="0" y1="0" x2="1" y2=".5"><stop offset="0" stopColor="#1f9fe0" /><stop offset=".5" stopColor="#35c1e0" /><stop offset="1" stopColor="#66e05a" /></linearGradient></defs>
        <path d="M0 14A15 15 0 0 1 30 13c0 5-4 7.500-8 7.500-3 0-4.500-1.500-3-3.500 1-5-5-8-10-6.500C4 12 1 13 0 14z" fill="url(#edge)" />
        <path d="M0 14C3 8 12 8 15 11c-5 1-5 12 6 14 3 .5 6-1 7.500-2C26 27.500 21 30 15 30 6 30-.5 23 0 14z" fill="#0f5ea8" />
        <circle cx="7.500" cy="22.500" r="7.500" fill="#e8b8ae" /><path d="M2.500 17.500c2-2 8-2 10 0v3l-4 1v8h-3l.5-7.500-3.500-1z" fill="#7d2a30" />
      </svg>
    ),
  },
  { name: "Pencil", icon: <svg className={S} viewBox="0 0 30 30"><path d="M8 2L29 14.500v1L8 28 1 15z" fill="#5ce28d" stroke="#fff" strokeWidth="2" strokeLinejoin="round" /><path d="M18 8.500L28 15l-10 6.500c-3-4-3-9 0-13z" fill="#1d2a5c" stroke="#fff" strokeWidth="1.500" /></svg> },
  { name: "Spotify", running: true, icon: <span className="flex size-[29px] rounded-full bg-black"><FaSpotify className="size-[29px] text-[#1ed760]" /></span> },
  {
    name: "Color picker",
    running: true,
    icon: (
      <svg className={S} viewBox="0 0 30 30">
        {["#ee1c1c", "#d8102a", "#6414b4", "#1f3ce6", "#1c86f0", "#1ea028", "#7cc81e", "#fbe01a", "#fb8a12"].map((c, i) => (
          <circle key={c} cx="15" cy="7.500" r="6" fill={c} fillOpacity=".9" transform={`rotate(${i * 40} 15 15)`} />
        ))}
      </svg>
    ),
  },
  { name: "Photos", running: true, icon: <svg className="size-[26px]" viewBox="0 0 26 26"><defs><linearGradient id="ph" x1="0" y1="0" x2="1" y2="1"><stop offset="0" stopColor="#2f6fd0" /><stop offset="1" stopColor="#8a4b9c" /></linearGradient></defs><rect width="26" height="26" rx="3" fill="url(#ph)" /><path d="M0 23L12 10c1-1 2-1 3 0l11 12v1c0 2-1 3-3 3H3c-2 0-3-1-3-3z" fill="#2fa8ea" /><path d="M4 26l10-10 9 10z" fill="#1b7fd0" /><circle cx="20" cy="5" r="2.600" fill="#fff" /></svg> },
];

function Taskbar() {
  return (
    <footer className="flex h-[60px] shrink-0 items-center border-t border-[#3d4144] bg-[linear-gradient(to_right,#22232a_0%,#222325_8%,#212122_19%,#35201a_25%,#3c1d15_36%,#152a38_41%,#152a38_54%,#20242d_60%,#20222a_100%)] text-white">
      <button aria-label="Widgets" className="relative ml-[25px] w-[35px]">
        <svg className="mt-3 size-[30px]" viewBox="0 0 30 30"><path d="M6 12h24c0 9-5 16-13 16-6 0-9-3-11-6z" fill="#ee8f1e" /><path d="M6 3h6M5 8h14M2 14h16M1 19h20M4 23h12" stroke="#f8dc86" strokeWidth="2.400" strokeLinecap="round" /></svg>
        <span className="absolute top-0 left-[15px] flex size-5 items-center justify-center rounded-full bg-[#ff99a4] text-sm text-black">1</span>
      </button>
      <div className="ml-[150px] flex">
        {APPS.map((a) => (
          <button key={a.name} aria-label={a.name} className="relative flex h-[50px] w-[55px] items-center justify-center">
            {a.active && <span className="absolute inset-x-[3px] inset-y-0 rounded-md border border-[#3a4852] bg-[#263743]" />}
            <span className="relative">{a.icon}</span>
            {a.active && <span className="absolute bottom-0 h-1 w-5 rounded-full bg-[#4cc2ff]" />}
            {a.running && <span className="absolute bottom-0 h-1 w-2 rounded-full bg-[#9a9ca0]" />}
          </button>
        ))}
      </div>
      <div className="ml-auto flex items-center pr-6 text-sm leading-5">
        <button aria-label="Show hidden icons"><svg className="h-[10px] w-[14px]" viewBox="0 0 14 10" fill="none" stroke="currentColor" strokeWidth="1.800"><path d="M1 8.500L7 2l6 6.500" /></svg></button>
        <button aria-label="OneDrive" className="ml-[22px]">
          <svg className="size-[22px]" viewBox="0 0 22 22"><path d="M5 16a4.500 4.500 0 0 1 0-9 6.500 6.500 0 0 1 11.500-1A5 5 0 0 1 21 11l-4 5z" fill="#1a7fd6" /><path d="M8 5a6 6 0 0 1 9 2l-6 4z" fill="#0f5fb0" /><circle cx="16" cy="15.500" r="5.700" fill="#fff" /><path d="M12.800 15a3.300 3.300 0 0 1 6-1.500M19.200 16a3.300 3.300 0 0 1-6 1.500" fill="none" stroke="#1a5fb8" strokeWidth="1.400" /></svg>
        </button>
        <button className="ml-5 w-8 text-center">ENG<br />IN</button>
        <button className="ml-[22px] flex items-center gap-[10px]" aria-label="Network, volume and battery">
          <svg className="size-5" viewBox="0 0 20 20" fill="none" stroke="currentColor" strokeWidth="1.600"><path d="M.8 8a13 13 0 0 1 18.400 0M3.800 11a9 9 0 0 1 12.400 0M6.800 14a5 5 0 0 1 6.400 0" /><circle cx="10" cy="16.500" r="1.300" fill="currentColor" /></svg>
          <svg className="size-5" viewBox="0 0 20 20" fill="none" stroke="currentColor" strokeWidth="1.400"><path d="M1 7.500h3l5-4.500v14L4 12.500H1zM12 7.500a4 4 0 0 1 0 5M14.500 5a7 7 0 0 1 0 10M17 2.500a11 11 0 0 1 0 15" /></svg>
          <svg className="size-5" viewBox="0 0 20 20" fill="none" stroke="currentColor" strokeWidth="1.400"><path d="M6 5.500h9c1.500 0 2.300.8 2.300 2.300v5.400c0 1.500-.8 2.300-2.300 2.300H4c-1.500 0-2.300-.8-2.300-2.300V11" /><rect x="4" y="8" width="11" height="5.500" rx="1" fill="currentColor" stroke="none" /><path d="M18.500 8.500v4" strokeWidth="2" /><path d="M4 0L1 5.500h2L2.500 9.500 6 4H4z" fill="currentColor" stroke="none" /></svg>
        </button>
        <button className="ml-[22px] text-right">19:49<br />11-05-2024</button>
        <button aria-label="Notifications" className="ml-[11px]"><svg className="size-[19px]" viewBox="0 0 19 19" fill="#8fe3fb"><path d="M9.500 0c4 0 6 3 6 6.500V10l2.500 3.500v1H1v-1L3.500 10V6.500C3.500 3 5.500 0 9.500 0zM6.500 16h6c-.5 2-1.500 3-3 3s-2.500-1-3-3z" /></svg></button>
        <button aria-label="Copilot preview" className="relative ml-5">
          <svg className="size-[31px]" viewBox="0 0 31 31">
            <defs><linearGradient id="cpa" x1="0" y1="0" x2="0" y2="1"><stop offset="0" stopColor="#1f8fe8" /><stop offset=".5" stopColor="#3fb7a0" /><stop offset="1" stopColor="#f5d02b" /></linearGradient><linearGradient id="cpb" x1="1" y1="0" x2="0" y2="1"><stop offset="0" stopColor="#9a6bf5" /><stop offset="1" stopColor="#f05a90" /></linearGradient></defs>
            <path d="M8 2c1-1 2-1.500 4-1.500h7L13 20H5c-4 0-5-2-4-5z" fill="url(#cpa)" /><path d="M12 1h6c3 0 4 1.500 5 6h-5c-2 0-3 1-3.500 3z" fill="#1c4fd0" /><path d="M19 8h8c3 0 3.500 2 3 5l-2 8H13z" fill="url(#cpb)" />
            <rect x="8" y="21" width="23" height="10" rx="2" fill="#ffc814" />
            <text x="19.500" y="29.300" textAnchor="middle" fontSize="9" fontWeight="700" fill="#1a1a1a">PRE</text>
          </svg>
        </button>
      </div>
    </footer>
  );
}

export default function App() {
  return (
    <div className={`flex h-screen flex-col overflow-hidden ${UI}`}>
      <TabStrip />
      <Toolbar />
      <BookmarkBar />
      <Page />
      <Taskbar />
    </div>
  );
}
